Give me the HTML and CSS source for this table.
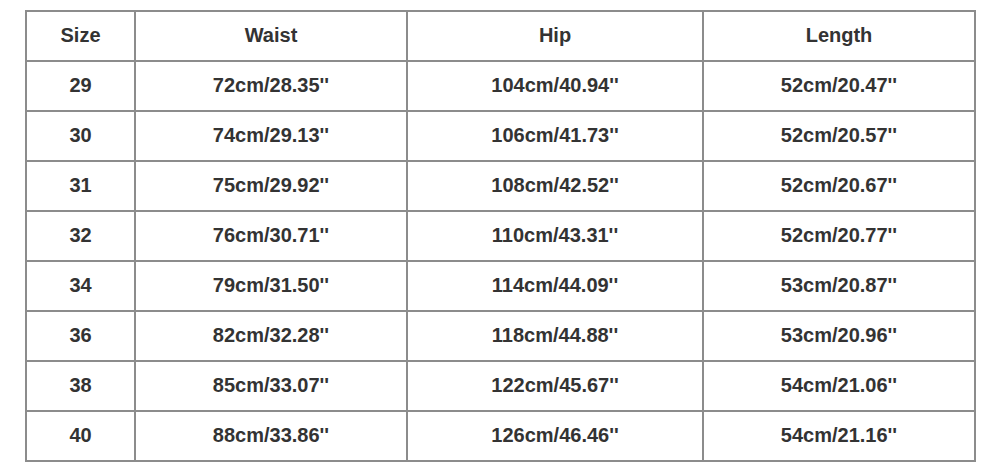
FILE: index.html
```html
<!DOCTYPE html>
<html>
<head>
<meta charset="utf-8">
<link rel="stylesheet" href="styles.css">
</head>
<body>
<table class="size-table">
  <colgroup>
    <col class="c1"><col class="c2"><col class="c3"><col class="c4">
  </colgroup>
  <tr><th>Size</th><th>Waist</th><th>Hip</th><th>Length</th></tr>
  <tr><td>29</td><td>72cm/28.35''</td><td>104cm/40.94''</td><td>52cm/20.47''</td></tr>
  <tr><td>30</td><td>74cm/29.13''</td><td>106cm/41.73''</td><td>52cm/20.57''</td></tr>
  <tr><td>31</td><td>75cm/29.92''</td><td>108cm/42.52''</td><td>52cm/20.67''</td></tr>
  <tr><td>32</td><td>76cm/30.71''</td><td>110cm/43.31''</td><td>52cm/20.77''</td></tr>
  <tr><td>34</td><td>79cm/31.50''</td><td>114cm/44.09''</td><td>53cm/20.87''</td></tr>
  <tr><td>36</td><td>82cm/32.28''</td><td>118cm/44.88''</td><td>53cm/20.96''</td></tr>
  <tr><td>38</td><td>85cm/33.07''</td><td>122cm/45.67''</td><td>54cm/21.06''</td></tr>
  <tr><td>40</td><td>88cm/33.86''</td><td>126cm/46.46''</td><td>54cm/21.16''</td></tr>
</table>
</body>
</html>
```
FILE: styles.css
```css
html, body {
  margin: 0;
  padding: 0;
  background: #fff;
}
body {
  padding: 10px 0 0 25px;
  font-family: "Liberation Sans", Arial, sans-serif;
}
.size-table {
  border-collapse: collapse;
  table-layout: fixed;
  width: 949px;
  color: #333;
  font-size: 20px;
  font-weight: bold;
}
.c1 { width: 109px; }
.c2 { width: 272px; }
.c3 { width: 296px; }
.c4 { width: 272px; }
.size-table th,
.size-table td {
  border: 2px solid #8c8c8c;
  height: 46px;
  padding: 0 0 2px;
  text-align: center;
  vertical-align: middle;
  font-weight: bold;
}
```
